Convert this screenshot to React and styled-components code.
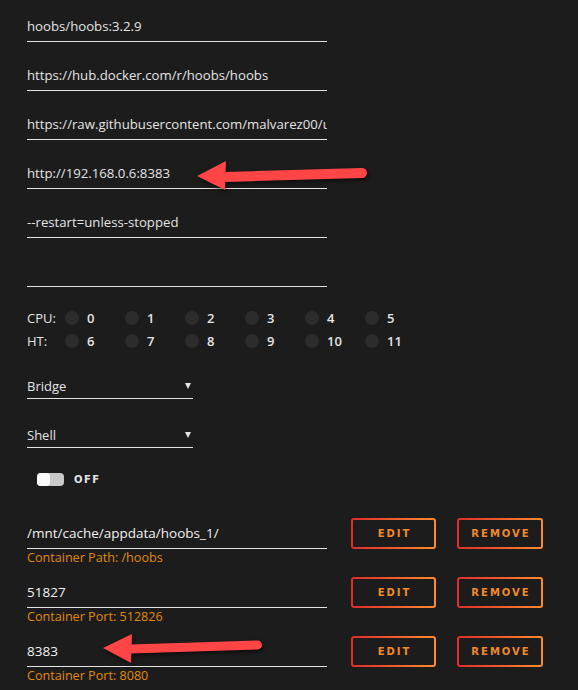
import React from 'react'
import styled, { createGlobalStyle } from 'styled-components'

const GlobalStyle = createGlobalStyle`
  html, body {
    margin: 0;
    padding: 0;
    background: #1c1c1c;
  }
  body {
    font-family: "Open Sans", "Noto Sans", sans-serif;
    color: #e4e4e4;
  }
`;

const Page = styled.div`
  position: relative;
  width: 578px;
  height: 690px;
  overflow: hidden;
  box-sizing: border-box;
  padding: 16px 0 0 27px;
`;

const Field = styled.div`
  width: 300px;
  height: 20px;
  line-height: 20px;
  padding-bottom: 5px;
  border-bottom: 1px solid #e4e4e4;
  font-size: 13.2px;
  white-space: nowrap;
  overflow: hidden;
  margin-top: ${p => p.$gap ?? 23}px;
`;

const CpuGrid = styled.div`
  margin-top: 19px;
  display: grid;
  grid-template-columns: 38px repeat(6, 60px);
  grid-auto-rows: 23px;
  align-items: center;
  font-size: 13px;
`;

const CpuLabel = styled.span`
  font-size: 13px;
`;

const Core = styled.div`
  display: flex;
  align-items: center;
  gap: 8px;
  font-weight: 600;
`;

const Dot = styled.span`
  width: 14px;
  height: 14px;
  border-radius: 50%;
  background: #2c2c2c;
`;

const Select = styled.div`
  width: 166px;
  height: 20px;
  line-height: 20px;
  padding-bottom: 2px;
  border-bottom: 1px solid #e4e4e4;
  margin-top: ${p => p.$gap}px;
  display: flex;
  justify-content: space-between;
  align-items: center;
  font-size: 13px;
`;

const Caret = styled.span`
  width: 0;
  height: 0;
  margin-right: 2px;
  border-left: 3px solid transparent;
  border-right: 3px solid transparent;
  border-top: 6px solid #e4e4e4;
`;

const ToggleRow = styled.div`
  margin-top: 23px;
  padding-left: 10px;
  display: flex;
  align-items: center;
  gap: 10px;
  height: 16px;
`;

const Switch = styled.span`
  width: 27px;
  height: 13px;
  border-radius: 4px;
  background: #c9c9c9;
  display: flex;
  align-items: center;
`;

const Knob = styled.span`
  width: 13px;
  height: 13px;
  border-radius: 4px;
  background: #fafafa;
`;

const SwitchText = styled.span`
  font-family: "DejaVu Sans", sans-serif;
  font-size: 10px;
  font-weight: bold;
  letter-spacing: 1.5px;
  color: #e4e4e4;
`;

const Mappings = styled.div`
  margin-top: 31px;
  display: flex;
  flex-direction: column;
  gap: 10px;
`;

const MapRow = styled.div`
  display: flex;
  align-items: flex-start;
`;

const MapInfo = styled.div`
  width: 300px;
  padding-top: 5px;
  margin-right: 24px;
`;

const MapValue = styled.div`
  height: 20px;
  line-height: 20px;
  padding-bottom: 5px;
  border-bottom: 1px solid #e4e4e4;
  font-size: 13.5px;
  color: #f2f2f2;
`;

const MapHint = styled.div`
  line-height: 18px;
  font-size: 12.6px;
  color: #e08a0e;
`;

const Button = styled.button`
  width: ${p => p.$w}px;
  height: 31px;
  margin-right: 21px;
  box-sizing: border-box;
  border: 2px solid transparent;
  border-radius: 3px;
  background:
    linear-gradient(#1c1c1c, #1c1c1c) padding-box,
    linear-gradient(90deg, #e22b2b 0%, #ff8c2f 100%) border-box;
  color: #f28a2c;
  font-family: "DejaVu Sans", sans-serif;
  font-size: 10px;
  font-weight: bold;
  letter-spacing: 2px;
  padding: 0 0 0 2px;
  cursor: pointer;
`;

const ArrowSvg = styled.svg`
  position: absolute;
  left: ${p => p.$x}px;
  top: ${p => p.$y}px;
  overflow: visible;
  filter: drop-shadow(1px 2px 2px rgba(0, 0, 0, 0.6));
`;

// tip at (0, tipY) inside svg, head back at headX, tail at (len, tailY)
const Arrow = ({ x, y, len, headX, headH, tipY, tailY, thick }) => (
  <ArrowSvg $x={x} $y={y} width={len + thick} height={headH}>
    <line
      x1={headX - 2}
      y1={tipY + 1}
      x2={len - thick / 2}
      y2={tailY}
      stroke="#ff4545"
      strokeWidth={thick}
      strokeLinecap="round"
    />
    <polygon
      points={`0,${tipY} ${headX},0 ${headX - 1},${headH}`}
      fill="#ff4545"
      strokeLinejoin="round"
    />
  </ArrowSvg>
);

const inputs = [
  'hoobs/hoobs:3.2.9',
  'https://hub.docker.com/r/hoobs/hoobs',
  'https://raw.githubusercontent.com/malvarez00/unraid-templates/master/hoobs.png',
  'http://192.168.0.6:8383',
  '--restart=unless-stopped',
  '',
];

const mappings = [
  { value: '/mnt/cache/appdata/hoobs_1/', hint: 'Container Path: /hoobs' },
  { value: '51827', hint: 'Container Port: 512826' },
  { value: '8383', hint: 'Container Port: 8080' },
];

const App = () => {
  return (
    <Page>
      <GlobalStyle />
      {inputs.map((v, i) => (
        <Field key={i} $gap={i === 0 ? 0 : 23}>{v}</Field>
      ))}

      <CpuGrid>
        <CpuLabel>CPU:</CpuLabel>
        {[0, 1, 2, 3, 4, 5].map(n => (
          <Core key={n}><Dot />{n}</Core>
        ))}
        <CpuLabel>HT:</CpuLabel>
        {[6, 7, 8, 9, 10, 11].map(n => (
          <Core key={n}><Dot />{n}</Core>
        ))}
      </CpuGrid>

      <Select $gap={24}>Bridge<Caret /></Select>
      <Select $gap={26}>Shell<Caret /></Select>

      <ToggleRow>
        <Switch><Knob /></Switch>
        <SwitchText>OFF</SwitchText>
      </ToggleRow>

      <Mappings>
        {mappings.map(m => (
          <MapRow key={m.value}>
            <MapInfo>
              <MapValue>{m.value}</MapValue>
              <MapHint>{m.hint}</MapHint>
            </MapInfo>
            <Button $w={85}>EDIT</Button>
            <Button $w={86}>REMOVE</Button>
          </MapRow>
        ))}
      </Mappings>

      <Arrow x={197} y={161} len={170} headX={29} headH={29} tipY={15} tailY={12} thick={10} />
      <Arrow x={103} y={634} len={159} headX={29} headH={29} tipY={14} tailY={11} thick={9} />
    </Page>
  )
}

export default App
